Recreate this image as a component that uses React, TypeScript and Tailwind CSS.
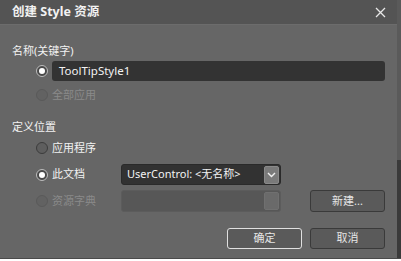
import React from "react";

const font = { fontFamily: '"Noto Sans", "Noto Sans CJK SC", sans-serif' };

function Radio({ checked, disabled }: { checked?: boolean; disabled?: boolean }) {
  if (disabled) {
    return (
      <div className="w-[12px] h-[12px] rounded-full border border-[#5a5a5a] bg-[#626262] shrink-0" />
    );
  }
  return (
    <div
      className={
        "w-[12px] h-[12px] rounded-full border shrink-0 flex items-center justify-center " +
        (checked ? "border-[#bdbdbd] bg-[#4a4a4a]" : "border-[#3c3c3c] bg-[#5e5e5e]")
      }
    >
      {checked && <div className="w-[6px] h-[6px] rounded-full bg-white" />}
    </div>
  );
}

export default function App() {
  return (
    <div className="w-[401px] h-[261px] bg-white overflow-hidden text-[11px]" style={font}>
      <div className="flex h-[258px]">
        <div className="w-[397px] h-[258px] bg-[#666666] flex flex-col">
          {/* title bar */}
          <div className="h-[25px] bg-[#545454] border-b border-[#6c6c6c] flex items-center pl-[12px] pr-[10px] shrink-0">
            <div className="text-[12.5px] font-bold text-[#f2f2f2] leading-none">创建 Style 资源</div>
            <div className="ml-auto w-[14px] h-[14px] flex items-center justify-center">
              <svg width="11" height="11" viewBox="0 0 11 11">
                <path d="M1 1 L10 10 M10 1 L1 10" stroke="#e8e8e8" strokeWidth="1.3" />
              </svg>
            </div>
          </div>

          {/* body */}
          <div className="flex flex-col pl-[12px]">
            <div className="h-[16px] mt-[17px] flex items-center text-[#f2f2f2] leading-none">名称(关键字)</div>
            <div className="mt-[3px] h-[20px] flex items-center pl-[24px]">
              <Radio checked />
              <div className="ml-[4px] w-[333px] h-[20px] rounded-[3px] bg-[#333333] flex items-center pl-[7px] text-[#f2f2f2] text-[11.5px]">
                ToolTipStyle1
              </div>
            </div>
            <div className="mt-[4px] h-[20px] flex items-center pl-[24px] text-[#8a8a8a]">
              <Radio disabled />
              <span className="ml-[4px]">全部应用</span>
            </div>

            <div className="h-[16px] mt-[13px] flex items-center text-[#f2f2f2] leading-none">定义位置</div>
            <div className="mt-[4px] h-[20px] flex items-center pl-[24px] text-[#f2f2f2]">
              <Radio />
              <span className="ml-[4px]">应用程序</span>
            </div>
            <div className="mt-[6px] h-[21px] flex items-center pl-[24px] text-[#f2f2f2]">
              <Radio checked />
              <span className="ml-[4px] w-[69px]">此文档</span>
              <div className="w-[160px] h-[21px] rounded-[3px] bg-[#323232] border border-[#2a2a2a] flex items-center pl-[5px] pr-[1px]">
                <span className="text-[11px]">UserControl: &lt;无名称&gt;</span>
                <div className="ml-auto w-[15px] h-[18px] rounded-[2px] bg-[#7a7a7a] border border-[#8a8a8a] flex items-center justify-center">
                  <svg width="9" height="6" viewBox="0 0 9 6">
                    <path d="M1 1 L4.5 4.5 L8 1" stroke="#f0f0f0" strokeWidth="1.4" fill="none" />
                  </svg>
                </div>
              </div>
            </div>
            <div className="mt-[5px] h-[22px] flex items-center pl-[24px] text-[#8a8a8a]">
              <Radio disabled />
              <span className="ml-[4px] w-[69px]">资源字典</span>
              <div className="w-[160px] h-[22px] rounded-[3px] bg-[#575757] border border-[#5c5c5c] flex items-center pr-[1px]">
                <div className="ml-auto w-[15px] h-[18px] rounded-[2px] bg-[#6a6a6a] border border-[#707070]" />
              </div>
              <div className="ml-[29px] w-[75px] h-[22px] rounded-[3px] bg-[#5a5a5a] border border-[#3a3a3a] flex items-center justify-center text-[#e6e6e6]">
                新建...
              </div>
            </div>

            <div className="mt-[16px] h-[21px] flex items-center pl-[215px] gap-[8px]">
              <div className="w-[75px] h-[21px] rounded-[3px] bg-[#5a5a5a] border border-[#e0e0e0] flex items-center justify-center text-[#e6e6e6]">
                确定
              </div>
              <div className="w-[75px] h-[21px] rounded-[3px] bg-[#5a5a5a] border border-[#3a3a3a] flex items-center justify-center text-[#e6e6e6]">
                取消
              </div>
            </div>
          </div>
        </div>
        <div className="w-[4px] h-[258px] flex flex-col">
          <div className="h-[160px] bg-[#5a5a5a]" />
          <div className="h-[98px] bg-[#3a3a3a]" />
        </div>
      </div>
      <div className="h-[1px] bg-[#4a4a4a]" />
    </div>
  );
}
